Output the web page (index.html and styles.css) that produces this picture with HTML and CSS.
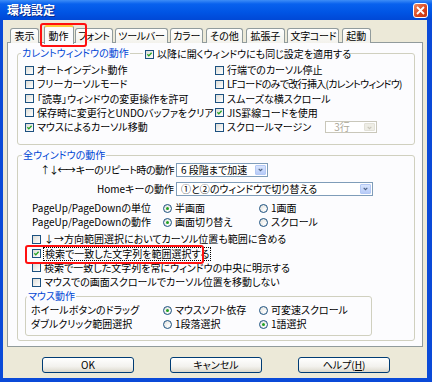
FILE: index.html
```html
<!DOCTYPE html>
<html lang="ja">

<head>
    <meta charset="UTF-8">
    <title>環境設定</title>
    <link rel="stylesheet" href="styles.css">
</head>

<body>
    <div class="window">
        <div class="titlebar">
            <span class="title">環境設定</span>
            <span class="close">
                <svg width="9" height="9" viewBox="0 0 9 9"><path d="M1 1 L8 8 M8 1 L1 8" stroke="#fff" stroke-width="1.8" /></svg>
            </span>
        </div>
        <div class="frame">
            <div class="tabs">
                <span class="tab">表示</span>
                <span class="tab active">動作<span class="mark mark-tab"></span></span>
                <span class="tab kana">フォント</span>
                <span class="tab kana">ツールバー</span>
                <span class="tab kana">カラー</span>
                <span class="tab">その他</span>
                <span class="tab">拡張子</span>
                <span class="tab kana">文字コード</span>
                <span class="tab">起動</span>
            </div>
            <div class="panel">
                <fieldset class="group group-current">
                    <legend>カレントウィンドウの動作</legend>
                    <label class="check legend-check"><span class="box on"><svg viewBox="0 0 9 9"><path d="M1.8 4.2 L3.6 6.2 L7.2 2.2" /></svg></span>以降に開くウィンドウにも同じ設定を適用する</label>
                    <div class="check-grid">
                        <label class="check"><span class="box"></span>オートインデント動作</label>
                        <label class="check"><span class="box"></span>行端でのカーソル停止</label>
                        <label class="check"><span class="box"></span>フリーカーソルモード</label>
                        <label class="check"><span class="box"></span><span class="tight">LFコードのみで改行挿入(カレントウィンドウ)</span></label>
                        <label class="check"><span class="box"></span>「読専」ウィンドウの変更操作を許可</label>
                        <label class="check"><span class="box"></span>スムーズな横スクロール</label>
                        <label class="check"><span class="box"></span>保存時に変更行とUNDOバッファをクリア</label>
                        <label class="check"><span class="box on"><svg viewBox="0 0 9 9"><path d="M1.8 4.2 L3.6 6.2 L7.2 2.2" /></svg></span>JIS罫線コードを使用</label>
                        <label class="check"><span class="box on"><svg viewBox="0 0 9 9"><path d="M1.8 4.2 L3.6 6.2 L7.2 2.2" /></svg></span>マウスによるカーソル移動</label>
                        <div class="check-with-select">
                            <label class="check"><span class="box"></span>スクロールマージン</label>
                            <span class="select select-margin disabled">3行<span class="drop"><svg viewBox="0 0 11 11"><path d="M3 4 L5.5 6.5 L8 4" /></svg></span></span>
                        </div>
                    </div>
                </fieldset>

                <fieldset class="group group-all">
                    <legend>全ウィンドウの動作</legend>
                    <div class="select-row">
                        <span class="select-label"><span class="arrows">↑ ↓ ←→</span><span class="repeat">キーのリピート時の動作</span></span>
                        <span class="select select-speed">6 段階まで加速<span class="drop"><svg viewBox="0 0 11 11"><path d="M3 4 L5.5 6.5 L8 4" /></svg></span></span>
                    </div>
                    <div class="select-row">
                        <span class="select-label">Homeキーの動作</span>
                        <span class="select select-home">①と②のウィンドウで切り替える<span class="drop"><svg viewBox="0 0 11 11"><path d="M3 4 L5.5 6.5 L8 4" /></svg></span></span>
                    </div>
                    <div class="radio-rows">
                        <div class="radio-row">
                            <span class="radio-label">PageUp/PageDownの単位</span>
                            <label class="opt"><span class="radio on"></span>半画面</label>
                            <label class="opt"><span class="radio"></span>1画面</label>
                        </div>
                        <div class="radio-row">
                            <span class="radio-label">PageUp/PageDownの動作</span>
                            <label class="opt"><span class="radio on"></span>画面切り替え</label>
                            <label class="opt"><span class="radio"></span>スクロール</label>
                        </div>
                    </div>
                    <div class="check-list">
                        <label class="check"><span class="box"></span>↓→方向範囲選択においてカーソル位置も範囲に含める</label>
                        <label class="check marked"><span class="box on"><svg viewBox="0 0 9 9"><path d="M1.8 4.2 L3.6 6.2 L7.2 2.2" /></svg></span><span class="focus">検索で一致した文字列を範囲選択する</span><span class="mark mark-row"></span></label>
                        <label class="check"><span class="box"></span>検索で一致した文字列を常にウィンドウの中央に明示する</label>
                        <label class="check"><span class="box"></span>マウスでの画面スクロールでカーソル位置を移動しない</label>
                    </div>
                    <fieldset class="group group-mouse">
                        <legend>マウス動作</legend>
                        <div class="radio-row">
                            <span class="radio-label">ホイールボタンのドラッグ</span>
                            <label class="opt"><span class="radio on"></span>マウスソフト依存</label>
                            <label class="opt"><span class="radio"></span>可変速スクロール</label>
                        </div>
                        <div class="radio-row">
                            <span class="radio-label">ダブルクリック範囲選択</span>
                            <label class="opt"><span class="radio"></span>1段落選択</label>
                            <label class="opt"><span class="radio on"></span>1語選択</label>
                        </div>
                    </fieldset>
                </fieldset>
            </div>
            <div class="buttons">
                <button>OK</button>
                <button>キャンセル</button>
                <button>ヘルプ(<u>H</u>)</button>
            </div>
        </div>
    </div>
</body>

</html>
```

FILE: styles.css
```css
* {
    box-sizing: border-box;
}

body {
    margin: 0;
    font-family: "Noto Sans CJK JP", "Noto Sans", sans-serif;
    font-size: 10px;
    line-height: 12px;
    font-feature-settings: "palt";
    color: #000;
    background: #3a6ea5;
}

.window {
    width: 432px;
    height: 382px;
    display: flex;
    flex-direction: column;
}

.titlebar {
    height: 20px;
    flex: none;
    display: flex;
    align-items: center;
    justify-content: space-between;
    padding: 0 4px 0 7px;
    background: linear-gradient(#3d8df7 0, #0861ee 20%, #0055e5 60%, #0048d6 100%);
}

.title {
    color: #fff;
    font-size: 12px;
    font-weight: bold;
    text-shadow: 1px 1px #0a2a8a;
}

.close {
    width: 15px;
    height: 15px;
    display: flex;
    align-items: center;
    justify-content: center;
    border: 1px solid #fff;
    border-radius: 3px;
    background: linear-gradient(135deg, #f08a62, #d9431c 60%, #c2360f);
}

.frame {
    flex: 1;
    display: flex;
    flex-direction: column;
    background: #ece9d8;
    border: solid #0a4ad8;
    border-width: 0 5px 4px 3px;
    padding: 0 4px 0 4px;
}

/* tabs */

.tabs {
    display: flex;
    align-items: flex-end;
    gap: 2.6px;
    height: 23px;
    padding-left: 3px;
    position: relative;
    z-index: 1;
    margin-bottom: -1px;
}

.tab {
    height: 15px;
    padding: 0 3.5px;
    border: 1px solid #919b9c;
    border-bottom: none;
    border-radius: 3px 3px 0 0;
    background: linear-gradient(#fff, #f3f2ec);
    line-height: 14px;
    white-space: nowrap;
}

.tab.kana {
    padding: 0 2px;
    letter-spacing: -0.3px;
}

.tab.active {
    position: relative;
    height: 19px;
    margin: 0 -1px -1px 2px;
    padding: 2px 4px 0;
    border-top: 2px solid #ffc83c;
    background: #fcfcfe;
}

.mark {
    position: absolute;
    border: 2px solid #ff1010;
    border-radius: 3px;
    pointer-events: none;
}

.mark-tab {
    left: -5px;
    top: -4px;
    width: 47px;
    height: 24px;
}

.panel {
    border: 1px solid #919b9c;
    background: #fcfcfe;
    padding: 0 7px 5px 9px;
}

/* group boxes */

.group {
    position: relative;
    margin: 0;
    border: 1px solid #d0d0bf;
    border-radius: 3px;
}

.group legend {
    color: #0046d5;
    padding: 0 1px;
}

.group-current {
    margin-top: 4px;
    padding: 4px 0 10px 7px;
}

.group-current legend {
    margin-left: -4px;
}

.legend-check {
    position: absolute;
    left: 125px;
    top: -12px;
    width: 206px;
    padding-left: 2px;
    background: #fcfcfe;
}

.check-grid {
    display: grid;
    grid-template-columns: 190px 1fr;
    grid-auto-rows: 14.25px;
}

.check {
    display: flex;
    align-items: center;
    gap: 3px;
    height: 14.25px;
    white-space: nowrap;
}

.tight {
    letter-spacing: -0.7px;
}

.box {
    width: 9px;
    height: 9px;
    flex: none;
    border: 1px solid #1c5180;
    background: linear-gradient(135deg, #dcdcd7, #fff);
}

.box svg {
    display: block;
    width: 7px;
    height: 7px;
}

.box path {
    stroke: #21a121;
    stroke-width: 1.7;
    fill: none;
}

.check-with-select {
    display: flex;
    align-items: center;
    gap: 14px;
}

/* selects */

.select {
    position: relative;
    height: 14px;
    display: flex;
    align-items: center;
    padding-left: 4px;
    border: 1px solid #7f9db9;
    background: #fff;
    white-space: nowrap;
}

.drop {
    position: absolute;
    right: 1px;
    top: 1px;
    width: 11px;
    height: 10px;
    border-radius: 1px;
    background: linear-gradient(#d9e5fd, #b7cbf8);
    border: 1px solid #b3c8f5;
}

.drop svg {
    display: block;
    width: 9px;
    height: 8px;
}

.drop path {
    stroke: #4d6185;
    stroke-width: 1.6;
    fill: none;
}

.select-margin {
    width: 52px;
    height: 12px;
    padding-left: 8px;
}

.select.disabled {
    border-color: #c9c7ba;
    color: #aca899;
    background: #fff;
}

.select.disabled .drop {
    height: 8px;
    background: #eeede5;
    border-color: #e2e1d8;
}

.select.disabled .drop path {
    stroke: #c9c7ba;
}

.group-all {
    margin-top: 4px;
    padding: 2px 0 4px 14px;
}

.group-all > legend {
    margin-left: -10px;
}

.select-row {
    display: flex;
    align-items: center;
    gap: 2px;
    height: 14px;
    margin-bottom: 5px;
}

.select-label {
    width: 142px;
    flex: none;
    display: flex;
    justify-content: flex-end;
    white-space: nowrap;
}

.arrows {
    letter-spacing: -1.8px;
    margin-right: 2px;
}

.repeat {
    letter-spacing: -0.5px;
}

.select-speed {
    width: 92px;
}

.select-home {
    width: 197px;
}

/* radios */

.radio-rows {
    margin-top: 1px;
}

.radio-row {
    display: flex;
    align-items: center;
    height: 14px;
}

.radio-label {
    width: 131px;
    flex: none;
}

.opt {
    width: 96px;
    display: flex;
    align-items: center;
    gap: 3px;
    white-space: nowrap;
}

.radio {
    width: 9px;
    height: 9px;
    flex: none;
    border: 1px solid #1c5180;
    border-radius: 50%;
    background: radial-gradient(circle at 65% 65%, #fff, #dcdcd7);
    display: flex;
    align-items: center;
    justify-content: center;
}

.radio.on::after {
    content: "";
    width: 3px;
    height: 3px;
    border-radius: 50%;
    background: #21a121;
}

.check-list {
    margin-top: 3px;
}

.check.marked {
    position: relative;
}

.focus {
    outline: 1px dotted #000;
    outline-offset: 0;
    padding: 0 1px;
}

.mark-row {
    left: -7px;
    top: -2px;
    width: 179px;
    height: 19px;
}

.group-mouse {
    width: 347px;
    margin: 1px 0 0 -7px;
    padding: 1px 0 4px 5px;
}

.group-mouse legend {
    margin-left: -4px;
}

.group-mouse .radio-label {
    width: 132px;
}

/* buttons */

.buttons {
    display: flex;
    gap: 36px;
    padding-left: 35px;
    margin-top: 10px;
}

button {
    width: 92px;
    height: 16px;
    padding: 0;
    font: inherit;
    color: #000;
    border: 1px solid #003c74;
    border-radius: 3px;
    background: linear-gradient(#fff, #f3f2ee 60%, #dcd8cc);
}
```
